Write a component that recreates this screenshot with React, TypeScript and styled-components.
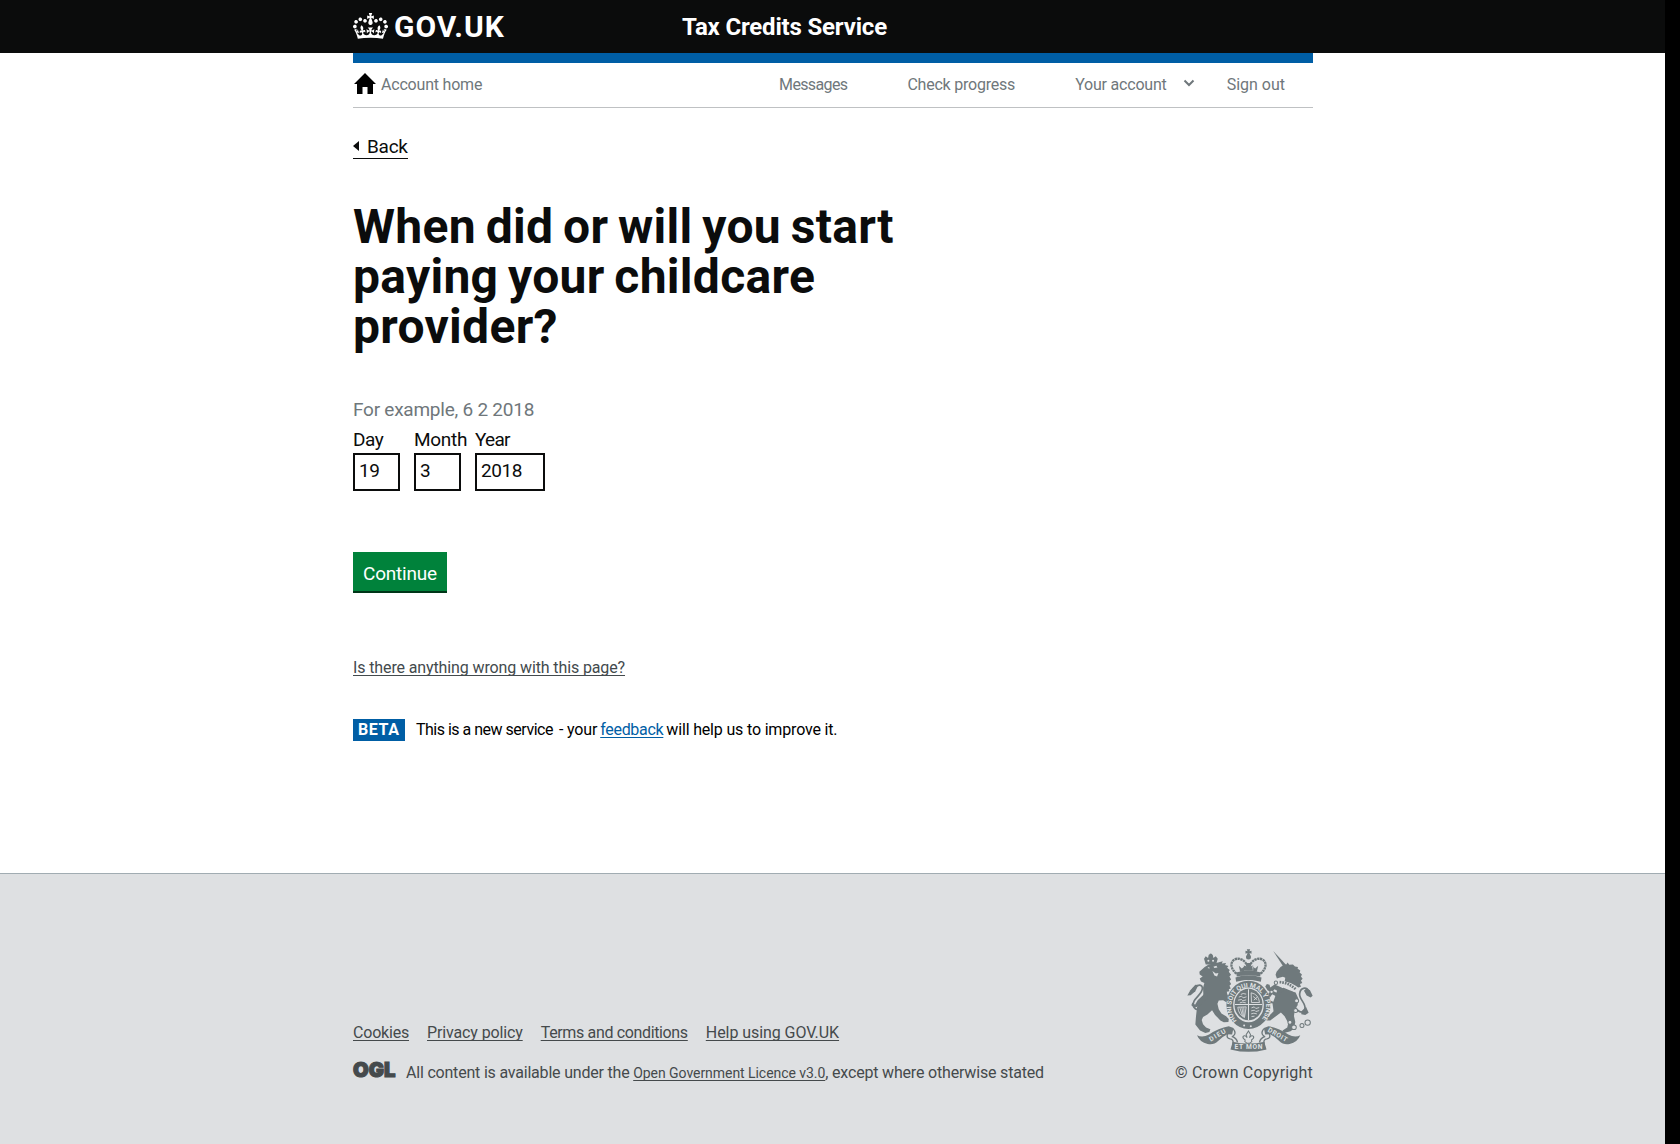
import React from 'react';
import styled, { createGlobalStyle } from 'styled-components';

const GlobalStyle = createGlobalStyle`
  body {
    margin: 0;
    background: #fff;
    color: #0b0c0c;
    font-family: Roboto, "Liberation Sans", Arial, sans-serif;
    font-size: 16px;
    line-height: 20px;
  }
  *, *::before, *::after { box-sizing: border-box; }
`;

const Window = styled.div`
  display: grid;
  grid-template-columns: 1fr 15px;
  height: 1144px;
  overflow: hidden;
  background: #000;
`;

const Page = styled.div`
  display: flex;
  flex-direction: column;
  background: #fff;
`;

const Container = styled.div`
  width: 960px;
  margin: 0 352px 0 353px;
`;

const Text = styled.span<{ $track?: number }>`
  letter-spacing: ${({ $track = 0 }) => $track}px;
  white-space: pre;
`;

const Header = styled.header`
  height: 53px;
  background: #0b0c0c;
  color: #fff;
`;

const HeaderInner = styled(Container)`
  display: grid;
  grid-template-columns: 329px 1fr;
  align-items: start;
`;

const Logo = styled.a`
  display: flex;
  gap: 6px;
  padding-top: 12px;
  color: #fff;
  font-size: 30px;
  font-weight: 700;
  line-height: 30px;
`;

const CrownIcon = styled.svg`
  width: 35px;
  height: 26px;
  margin-top: 1px;
  fill: #fff;
`;

const ServiceName = styled.div`
  padding-top: 12px;
  font-size: 24px;
  font-weight: 700;
  line-height: 30px;
`;

const BlueBar = styled(Container)`
  height: 10px;
  background: #005ea5;
`;

const AccountNav = styled(Container)`
  display: flex;
  justify-content: space-between;
  height: 45px;
  padding-top: 12px;
  border-bottom: 1px solid #bfc1c3;
  color: #6f777b;
`;

const HomeLink = styled.a`
  display: flex;
  gap: 5px;
`;

const HomeIcon = styled.svg`
  width: 23px;
  height: 22px;
  margin-top: -2px;
`;

const NavLinks = styled.div`
  display: flex;
  gap: 60px;
  padding-right: 28px;
`;

const AccountMenu = styled.a`
  display: flex;
  gap: 16px;
  margin-right: -28px;
`;

const Chevron = styled.svg`
  width: 12px;
  height: 8px;
  margin-top: 4px;
`;

const Main = styled(Container).attrs({ as: 'main' })`
  display: flex;
  flex-direction: column;
  align-items: flex-start;
  height: 765px;
`;

const BackLink = styled.a`
  display: flex;
  align-items: center;
  gap: 8px;
  height: 25px;
  margin-top: 26px;
  border-bottom: 1px solid #0b0c0c;
  font-size: 19px;
  line-height: 25px;
`;

const BackArrow = styled.span`
  width: 0;
  height: 0;
  margin-top: -1px;
  border-style: solid;
  border-width: 5px 6px 5px 0;
  border-color: transparent #0b0c0c transparent transparent;
`;

const Heading = styled.h1`
  width: 630px;
  margin: 43px 0 45px;
  font-size: 48px;
  font-weight: 700;
  line-height: 50px;
  letter-spacing: 0.3px;
  word-spacing: -2.5px;
`;

const Hint = styled.div`
  margin-bottom: 5px;
  color: #6f777b;
  font-size: 19px;
  line-height: 25px;
`;

const DateFields = styled.div`
  display: grid;
  grid-template-columns: 47px 47px 70px;
  column-gap: 14px;
`;

const Field = styled.label`
  display: flex;
  flex-direction: column;
  gap: 1px;
  font-size: 19px;
  line-height: 25px;
`;

const FieldInput = styled.input`
  width: 100%;
  height: 38px;
  padding: 0 4px 3px;
  border: 2px solid #0b0c0c;
  border-radius: 0;
  background: #fff;
  color: #0b0c0c;
  font: inherit;
  letter-spacing: -0.4px;
`;

const Continue = styled.button`
  width: 94px;
  height: 39px;
  margin-top: 61px;
  padding: 5px 0 0;
  border: 0;
  background: #00823b;
  box-shadow: 0 2px 0 #003618;
  color: #fff;
  font: inherit;
  font-size: 19px;
`;

const ProblemLink = styled.a`
  margin-top: 67px;
  color: #434a4d;
  text-decoration: underline 1px;
  text-underline-offset: 2px;
  text-decoration-skip-ink: none;
`;

const PhaseBanner = styled.div`
  display: flex;
  align-items: flex-start;
  margin-top: 41px;
  line-height: 22px;
  white-space: pre;
  color: #000;
`;

const PhaseTag = styled.strong`
  width: 52px;
  height: 22px;
  margin-right: 11px;
  padding-left: 5px;
  background: #005ea5;
  color: #fff;
  font-weight: 700;
`;

const Feedback = styled.a`
  margin: 0 3px;
  color: #005ea5;
  text-decoration: underline 1px;
  text-underline-offset: 2px;
  text-decoration-skip-ink: none;
`;

const Dash = styled.span`
  margin-left: 6px;
`;

const Footer = styled.footer`
  flex: 1;
  padding-top: 75px;
  border-top: 1px solid #a1acb2;
  background: #dee0e2;
  color: #454a4c;
`;

const FooterInner = styled(Container)`
  display: flex;
  justify-content: space-between;
  align-items: flex-end;
  height: 134px;
`;

const FooterMeta = styled.div`
  display: flex;
  flex-direction: column;
  gap: 20px;
`;

const FooterLinks = styled.div`
  display: flex;
  gap: 18px;
`;

const FooterLink = styled.a<{ $small?: boolean }>`
  font-size: ${({ $small }) => ($small ? 14 : 16)}px;
  text-decoration: underline 1px;
  text-underline-offset: 2px;
  text-decoration-skip-ink: none;
`;

const Licence = styled.div`
  display: flex;
  white-space: pre;
`;

const OglLogo = styled.svg`
  width: 43px;
  height: 18px;
  margin: -2px 10px 0 0;
  overflow: visible;
`;

const LicenceText = styled.p`
  margin: 0;
`;

const Copyright = styled.div`
  display: flex;
  flex-direction: column;
  align-items: flex-end;
  gap: 11px;
`;

const Arms = styled.svg`
  width: 126px;
  height: 103px;
`;

const Crown = () => (
  <CrownIcon viewBox="0 0 132 97" preserveAspectRatio="none">
    <path d="M25 30.2c3.5 1.5 7.7-.2 9.1-3.7 1.5-3.6-.2-7.8-3.9-9.2-3.6-1.4-7.6.3-9.1 3.9-1.4 3.5.3 7.5 3.9 9zM9 39.5c3.6 1.5 7.8-.2 9.2-3.7 1.5-3.6-.2-7.8-3.9-9.1-3.6-1.5-7.6.2-9.1 3.8-1.4 3.5.3 7.5 3.8 9zM4.4 57.2c3.5 1.5 7.7-.2 9.1-3.8 1.5-3.6-.2-7.7-3.9-9.1-3.5-1.5-7.6.3-9.1 3.8-1.4 3.5.3 7.6 3.9 9.1zm38.3-21.4c3.5 1.5 7.7-.2 9.1-3.8 1.5-3.6-.2-7.7-3.9-9.1-3.6-1.5-7.6.3-9.1 3.8-1.3 3.6.4 7.7 3.9 9.1zm64.4-5.6c-3.6 1.5-7.8-.2-9.1-3.7-1.5-3.6.2-7.8 3.8-9.2 3.6-1.4 7.7.3 9.2 3.9 1.3 3.5-.4 7.5-3.9 9zm15.9 9.3c-3.6 1.5-7.7-.2-9.1-3.7-1.5-3.6.2-7.8 3.7-9.1 3.6-1.5 7.7.2 9.2 3.8 1.5 3.5-.3 7.5-3.8 9zm4.7 17.7c-3.6 1.5-7.8-.2-9.2-3.8-1.5-3.6.2-7.7 3.9-9.1 3.6-1.5 7.7.3 9.2 3.8 1.3 3.5-.4 7.6-3.9 9.1zM89.3 35.8c-3.6 1.5-7.8-.2-9.2-3.8-1.4-3.6.2-7.7 3.9-9.1 3.6-1.5 7.7.3 9.2 3.8 1.4 3.6-.3 7.7-3.9 9.1zM69.7 17.7l8.9 4.7V9.3l-8.9 2.8c-.2-.3-.5-.6-.9-.9L72.4 0H59.6l3.5 11.2c-.3.3-.6.5-.9.9l-8.8-2.8v13.1l8.8-4.7c.3.3.6.7.9.9l-5 15.4v.1c-.2.8-.4 1.6-.4 2.4 0 4.1 3.1 7.5 7 8.1h.2c.3 0 .7.1 1 .1.4 0 .7 0 1-.1h.2c4-.6 7.1-4.1 7.1-8.1 0-.8-.1-1.7-.4-2.4V34l-5.1-15.4c.4-.2.7-.6 1-.9zM66 92.8c16.9 0 32.8 1.1 47.1 3.2 4-16.9 8.9-26.7 14-33.5l-9.6-3.4c1 4.9 1.1 7.2 0 10.2-1.5-1.4-3-4.3-4.2-8.7L108.6 76c2.8-2 5-3.2 7.5-3.3-4.4 9.4-10 11.9-13.6 11.2-4.3-.8-6.3-4.6-5.6-7.9 1-4.7 5.7-5.9 8-.5 4.3-8.7-3-11.4-7.6-8.8 7.1-7.2 7.9-13.5 2.1-21.1-8 6.1-8.1 12.3-4.5 20.8-4.7-5.4-12.1-2.5-9.5 6.2 3.4-5.2 7.9-2 7.2 3.1-.6 4.3-6.4 7.8-13.5 7.2-10.3-.9-10.9-8-11.2-13.8 2.5-.5 7.1 1.8 11 7.3L80.2 60c-4.1 4.4-8 5.3-12.3 5.4 1.4-4.4 8-11.6 8-11.6H55.5s6.4 7.2 7.9 11.6c-4.2-.1-8-1-12.3-5.4l1.4 16.4c3.9-5.5 8.5-7.7 10.9-7.3-.3 5.8-.9 12.8-11.1 13.8-7.2.6-12.9-2.9-13.5-7.2-.7-5 3.8-8.3 7.1-3.1 2.7-8.7-4.6-11.6-9.4-6.2 3.7-8.5 3.6-14.7-4.6-20.8-5.8 7.6-5 13.9 2.2 21.1-4.7-2.6-11.9.1-7.7 8.8 2.3-5.5 7.1-4.2 8.1.5.7 3.3-1.3 7.1-5.7 7.9-3.5.7-9-1.8-13.5-11.2 2.5.1 4.7 1.3 7.5 3.3l-4.7-15.4c-1.2 4.4-2.7 7.2-4.3 8.7-1.1-3-.9-5.3 0-10.2l-9.5 3.4c5 6.9 9.9 16.7 14 33.5 14.8-2.1 30.8-3.2 47.7-3.2z" />
  </CrownIcon>
);

const ink = '#6f797c';
const paper = '#dee0e2';

const RoyalArms = () => (
  <Arms viewBox="83 56 377 308" preserveAspectRatio="none">
    <defs>
      <path id="garter" d="M232 270A52 57 0 1 1 303 270" />
    </defs>
    {/* lion */}
    <g fill={ink}>
      <path d="M139 102l-5-17 5-7 7 5 2-10h12l2 10 7-5 6 7-5 17z" />
      <circle cx="154" cy="74" r="4.500" />
      <path d="M136 110l12-8 28-6 14-3-3 6 13-1-3 6 10 3-4 5 8 7-3 5 7 9-5 5 5 9-5 5 5 9-5 5 4 8-6 2 2 6-8 2c1 10 5 14 9 19l11 14 4 16-9-3-11-12-15-9-13 1-4 10 4 16 8 13 14 8 8 8-1 9-14 1-10-5-16-17-9-14-14 13-13 7-4 9 4 13 9 10 13 5-3 8-12 3-16-7-14-18 2-26 3-26 11-16 8-20-1-22 4-14-10-5-4-9 9-6-9-6-1-8z" />
      <path d="M139 168l-6 24-18 17-8 14-8-7-3 8 8 8 16-5 9-11 17-13z" />
    </g>
    <g fill={paper}>
      <circle cx="147" cy="91" r="3" />
      <circle cx="161" cy="91" r="3" />
      <path d="M162 109l9-3 3 5-9 2zM159 122l10 7 8-1-4 10-8-3zM144 113l5-3 2 4z" />
    </g>
    <path
      d="M118 238c-15-2-20-14-14-26 8-14 28-26 25-41-3-13-23-8-37 19"
      fill="none"
      stroke={ink}
      strokeWidth="5"
    />
    <path d="M84 195l9-16 15-16 9 1-9 18-14 12z" fill={ink} />
    {/* unicorn */}
    <g fill={ink}>
      <path d="M341 62l39 42-8 6z" />
      <path d="M348 133l3-9 12-14 9-6 8-2 4-6 5 7 11-1 6 6 9 2-1 5 8 5-2 6 7 6-3 6 5 7-5 5 4 8-7 3 3 8-8 2-9-6-14-7-18-4 2-12-7-3-11 3-7 2z" />
      <path d="M354 176l18-4 18 7 18 7 8 18-2 20-8 12-3 20 4 18-4 20-10 8-20 5-4-7 14-9 3-14-11-20-11-11-16 12-16 12-14 0-11 8 1-11 17-7 17-18-3-22 7-20z" />
      <path d="M362 186l-17-10-9 10-12-7-7-11 5-7 8 2 2 8 13-9 21 9 9 9zM358 202l-20-11-7 10 1 9 14 6-2 4-16-3-8-16 8-14 14-5 20 10z" />
    </g>
    <path d="M358 157q26 0 51 23" fill="none" stroke={paper} strokeWidth="14" />
    <path d="M360 155q26 1 48 21" fill="none" stroke={ink} strokeWidth="8" strokeDasharray="5 3" />
    <path
      d="M404 226c9 18 24 24 31 12 8-17-17-31-15-48 2-19 20-22 27-8"
      fill="none"
      stroke={ink}
      strokeWidth="5"
    />
    <path d="M433 181l8-8 10 6 8 17-6 5-12-6zM425 243l14-14 8 18-10 6-12-2z" fill={ink} />
    <g fill={paper} stroke={ink} strokeWidth="3">
      <circle cx="411" cy="211" r="6" />
      <circle cx="408" cy="240" r="6" />
      <circle cx="391" cy="275" r="6" />
      <circle cx="403" cy="290" r="7" />
      <circle cx="427" cy="285" r="6" />
      <circle cx="444" cy="276" r="8" />
      <circle cx="336" cy="184" r="5" />
      <circle cx="349" cy="157" r="5" />
    </g>
    {/* central crown */}
    <g fill={ink}>
      <path d="M262 57h10l-2 6 6-2v9l-6-2 2 7h-10l2-7-6 2v-9l6 2z" />
      <circle cx="267" cy="80" r="7.500" />
      <path d="M230 126q37-11 74 0l-2 12q-35-9-70 0zM228 141q38-13 78 0l-2 13q-37-10-74 0z" />
      <path d="M238 106l9 8 9-7-3 17h-11zM258 98h18l-4 10 9-3v16h-28v-16l9 3zM296 106l-9 8-9-7 3 17h11z" />
    </g>
    <g fill="none" stroke={ink} strokeWidth="7" strokeDasharray="7 1.500">
      <path d="M231 130c-31-28-8-52 14-43 10 4 17 13 20 24" />
      <path d="M303 130c31-28 8-52-14-43-10 4-17 13-20 24" />
    </g>
    {/* garter and shield */}
    <ellipse cx="267" cy="223" rx="66" ry="74" fill={paper} />
    <ellipse cx="267" cy="223" rx="56" ry="62" fill="none" stroke={ink} strokeWidth="20" />
    <text fill={paper} fontFamily="Roboto" fontSize="20" fontWeight="700">
      <textPath href="#garter" textLength="256">HONI SOIT QUI MAL Y PENSE</textPath>
    </text>
    <circle cx="254" cy="285" r="3" fill={paper} />
    <circle cx="274" cy="287" r="3" fill={paper} />
    <ellipse cx="267" cy="222" rx="42" ry="47" fill={ink} />
    <path d="M267 176v92M226 222h82" stroke={paper} strokeWidth="3" />
    <g fill="none" stroke={paper} strokeWidth="2.5">
      <path d="M238 200l8-3 5 5 10-3M236 209l10-2 4 4 10-3M241 217l8-2 10 2M244 192l7-3 9 2" />
      <path d="M276 232l8-3 5 5 10-3M275 241l10-2 4 4 10-3M275 250l8-2 9 2M276 258l9-1" />
      <path d="M275 187q22 4 25 29h-24zM281 198l12 10M283 209l10-9" />
      <path d="M235 230q2 22 20 31l5-32zM241 231l8 25M247 230l5 28M253 230l1 29" />
    </g>
    {/* ribbon */}
    <g fill={ink}>
      <path d="M113 314q16 8 36-2 28-20 59-25l14 5-4 20-14-1q-15 7-28 20-13 13-31 9-24-5-32-26z" />
      <path d="M422 314q-16 8-36-2-28-20-59-25l-14 5 4 20 14-1q15 7 28 20 13 13 31 9 24-5 32-26z" />
      <path d="M219 333q48 11 96 0l3 24q-51 13-102 0z" />
    </g>
    <path
      d="M267 301l6 11-3 9q7-9 12-4 3 6-6 11l1 5-7 5h-7l-7-5 1-5q-9-5-6-11 5-5 12 4l-3-9z"
      fill={paper}
      stroke={ink}
      strokeWidth="3"
    />
    <g fill="none" stroke={ink} strokeWidth="4">
      <path d="M205 309q-6 14 7 16 10 1 9 12l-6 20M221 294q12 15-1 23M234 335q-2-13-17-18" />
      <path d="M329 309q6 14-7 16-10 1-9 12l6 20M313 294q-12 15 1 23M300 335q2-13 17-18" />
    </g>
    <g fill={paper} fontFamily="Roboto" fontSize="20" fontWeight="700">
      <text transform="translate(154 333) rotate(-30)" textLength="54">DIEU</text>
      <text x="225" y="356" textLength="84">ET MON</text>
      <text transform="translate(323 302) rotate(30)" textLength="64">DROIT</text>
    </g>
  </Arms>
);

const DateField = ({ label, value, track }: { label: string; value: string; track: number }) => (
  <Field>
    <Text $track={track}>{label}</Text>
    <FieldInput defaultValue={value} />
  </Field>
);

const footerLinks: [string, number][] = [
  ['Cookies', -0.2],
  ['Privacy policy', -0.13],
  ['Terms and conditions', -0.35],
  ['Help using GOV.UK', -0.06],
];

export default function App() {
  return (
    <>
      <GlobalStyle />
      <Window>
        <Page>
          <Header>
            <HeaderInner>
              <Logo>
                <Crown />
                <Text $track={1}>GOV.UK</Text>
              </Logo>
              <ServiceName>
                <Text $track={-0.18}>Tax Credits Service</Text>
              </ServiceName>
            </HeaderInner>
          </Header>
          <BlueBar />
          <AccountNav>
            <HomeLink>
              <HomeIcon viewBox="0 0 23 22">
                <path d="M12 0L23 11h-3v10h-5.500v-7h-5v7H4V11H1z" fill="#000" />
              </HomeIcon>
              <Text $track={-0.2}>Account home</Text>
            </HomeLink>
            <NavLinks>
              <Text $track={-0.63}>Messages</Text>
              <Text $track={-0.22}>Check progress</Text>
              <AccountMenu>
                <Text $track={-0.2}>Your account</Text>
                <Chevron viewBox="0 0 12 8">
                  <path d="M1.500 1.500L6 6l4.500-4.500" fill="none" stroke="#6f777b" strokeWidth="2" />
                </Chevron>
              </AccountMenu>
              <Text>Sign out</Text>
            </NavLinks>
          </AccountNav>
          <Main>
            <BackLink>
              <BackArrow />
              <Text $track={-0.25}>Back</Text>
            </BackLink>
            <Heading>When did or will you start paying your childcare provider?</Heading>
            <Hint>
              <Text $track={-0.24}>For example, 6 2 2018</Text>
            </Hint>
            <DateFields>
              <DateField label="Day" value="19" track={-0.4} />
              <DateField label="Month" value="3" track={-0.3} />
              <DateField label="Year" value="2018" track={-0.7} />
            </DateFields>
            <Continue>
              <Text $track={-0.22}>Continue</Text>
            </Continue>
            <ProblemLink>
              <Text $track={-0.12}>Is there anything wrong with this page?</Text>
            </ProblemLink>
            <PhaseBanner>
              <PhaseTag>
                <Text $track={0.6}>BETA</Text>
              </PhaseTag>
              <Text $track={-0.5}>This is a new service</Text>
              <Dash>
                <Text $track={-0.15}>- your</Text>
              </Dash>
              <Feedback>
                <Text $track={-0.3}>feedback</Text>
              </Feedback>
              <Text $track={-0.17}>will help us to improve it.</Text>
            </PhaseBanner>
          </Main>
          <Footer>
            <FooterInner>
              <FooterMeta>
                <FooterLinks>
                  {footerLinks.map(([label, track]) => (
                    <FooterLink key={label}>
                      <Text $track={track}>{label}</Text>
                    </FooterLink>
                  ))}
                </FooterLinks>
                <Licence>
                  <OglLogo viewBox="0 0 43 18">
                    <text
                      x="0"
                      y="16"
                      fill="#454a4c"
                      stroke="#454a4c"
                      strokeWidth="1.2"
                      fontFamily="Inter"
                      fontSize="20.500"
                      fontWeight="900"
                      textLength="42.500"
                      lengthAdjust="spacingAndGlyphs"
                    >
                      OGL
                    </text>
                  </OglLogo>
                  <LicenceText>
                    <Text $track={-0.2}>{'All content is available under the '}</Text>
                    <FooterLink $small>
                      <Text $track={-0.05}>Open Government Licence v3.0</Text>
                    </FooterLink>
                    <Text $track={-0.18}>, except where otherwise stated</Text>
                  </LicenceText>
                </Licence>
              </FooterMeta>
              <Copyright>
                <RoyalArms />
                <Text $track={0.2}>© Crown Copyright</Text>
              </Copyright>
            </FooterInner>
          </Footer>
        </Page>
      </Window>
    </>
  );
}
